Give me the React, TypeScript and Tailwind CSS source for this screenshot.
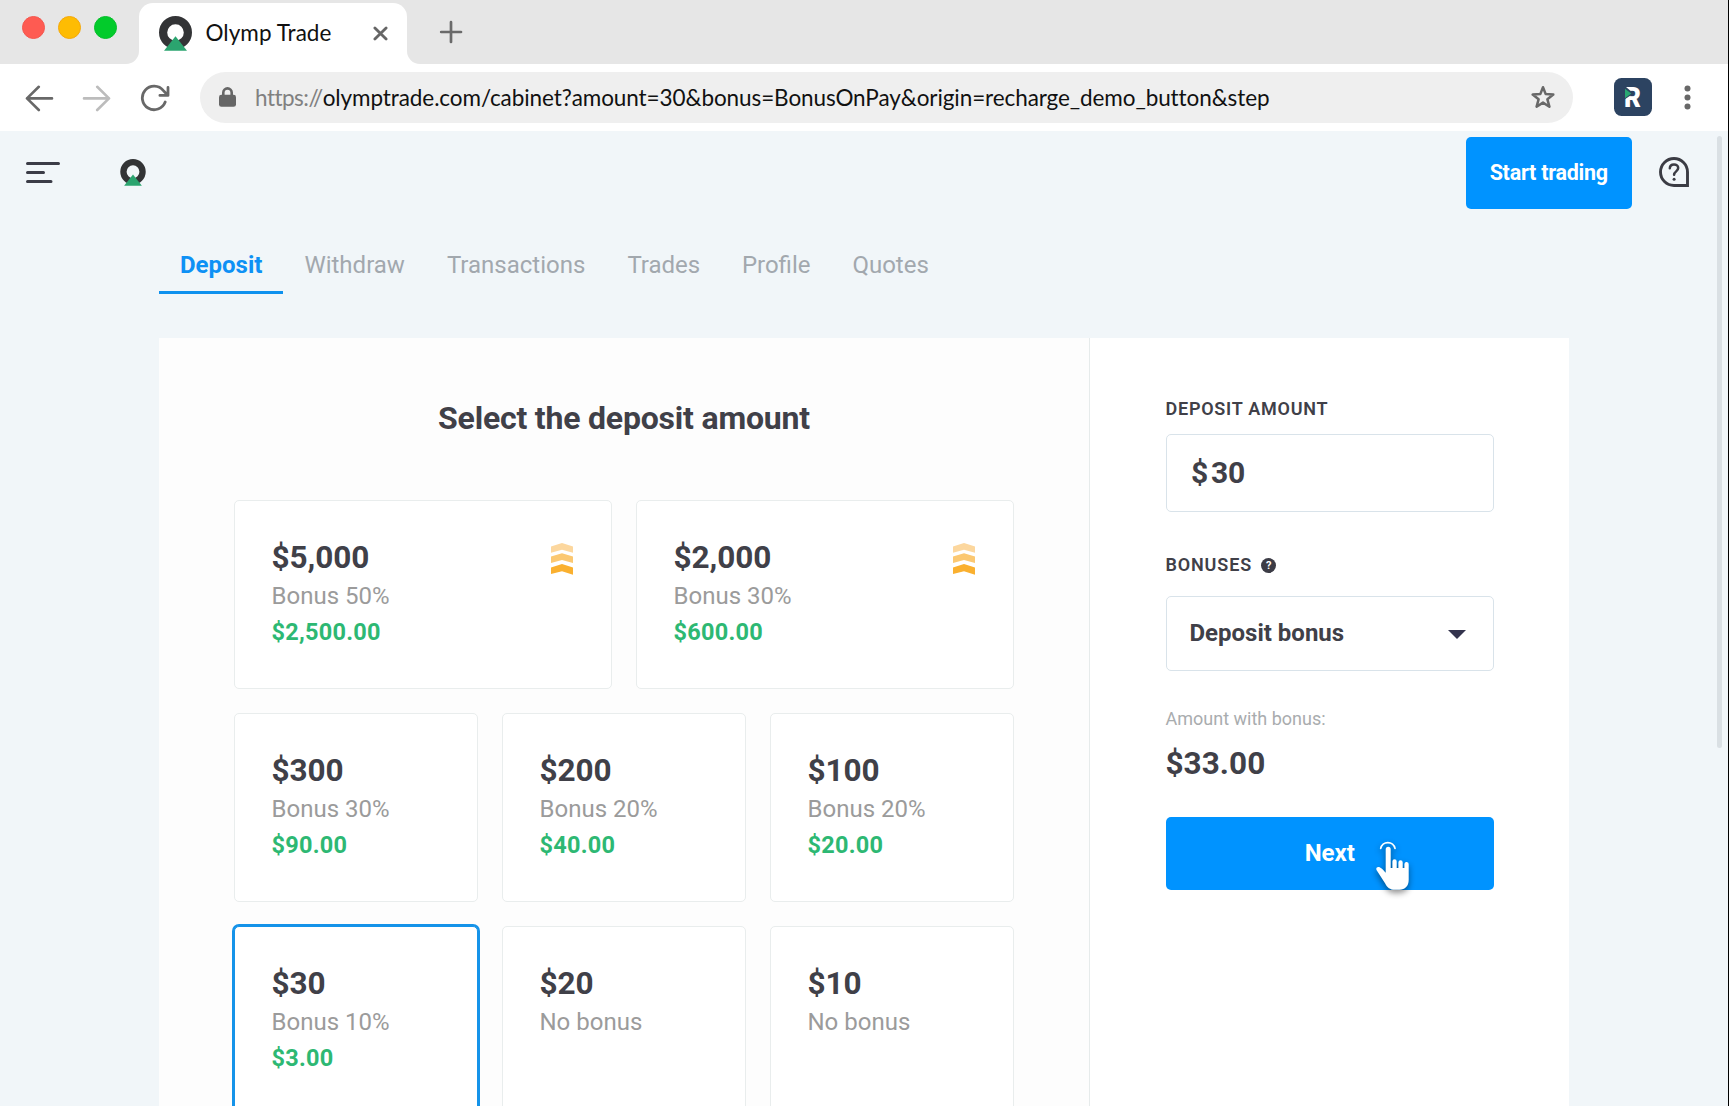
import type { ReactNode } from "react";

function OlympLogo({ className }: { className: string }) {
  return (
    <svg className={className} viewBox="0 0 33 35" fill="none">
      <circle cx="16.5" cy="16.5" r="12.4" stroke="#333436" strokeWidth="8.2" />
      <path d="M16.5 20.2 28 34.8H5z" fill="#2ba46f" />
    </svg>
  );
}

function TabStrip() {
  return (
    <div className="flex h-16 shrink-0 items-end bg-[#e6e6e6]">
      <div className="mb-[25px] ml-[22px] flex gap-[13px] self-end">
        <span className="size-[23px] rounded-full border border-[#f4574e] bg-[#fe5b52]" />
        <span className="size-[23px] rounded-full border border-[#f5a80b] bg-[#febc03]" />
        <span className="size-[23px] rounded-full border border-[#06bf2b] bg-[#02cb2b]" />
      </div>
      <svg className="ml-[9px] size-[13px] shrink-0" viewBox="0 0 13 13">
        <path d="M13 0v13H0A13 13 0 0 0 13 0z" fill="#fff" />
      </svg>
      <div className="flex h-[61px] w-[268px] shrink-0 rounded-t-[14px] bg-white pl-5">
        <OlympLogo className="mt-[13px] h-[35px] w-[33px] shrink-0" />
        <span className="ml-[13.5px] mt-3 w-[140px] whitespace-nowrap font-['Lato'] text-[22.5px] leading-[36px] tracking-[0.05px] text-[#111]">
          Olymp Trade
        </span>
        <svg className="ml-[27px] mt-[23px] size-[15px] shrink-0" viewBox="0 0 15 15" stroke="#666" strokeWidth="2.8" strokeLinecap="round">
          <path d="M1.9 1.9l11.2 11.2M13.1 1.9 1.9 13.1" />
        </svg>
      </div>
      <svg className="size-[13px] shrink-0" viewBox="0 0 13 13">
        <path d="M0 0v13h13A13 13 0 0 1 0 0z" fill="#fff" />
      </svg>
      <svg className="mb-[20px] ml-[18.5px] size-[24px] shrink-0" viewBox="0 0 24 24" stroke="#6a6a6a" strokeWidth="2.7" strokeLinecap="round">
        <path d="M12 2.2v19.8M2.2 12h19.8" />
      </svg>
    </div>
  );
}

function Toolbar() {
  return (
    <div className="flex h-[67px] shrink-0 items-start bg-white pt-2">
      <svg className="ml-[25px] mt-[13px] h-[27px] w-[29px] shrink-0" viewBox="0 0 29 27" fill="none" stroke="#686868" strokeWidth="2.6" strokeLinecap="round" strokeLinejoin="round">
        <path d="M27 13.4H2M13.8 1.8 2 13.4 13.8 25" />
      </svg>
      <svg className="ml-[28px] mt-[13px] h-[27px] w-[29px] shrink-0" viewBox="0 0 29 27" fill="none" stroke="#bcbcbc" strokeWidth="2.6" strokeLinecap="round" strokeLinejoin="round">
        <path d="M2 13.4h25M15.2 1.8 27 13.4 15.2 25" />
      </svg>
      <svg className="ml-[29px] mt-[12px] h-[28px] w-[30px] shrink-0" viewBox="0 0 30 28" fill="none" stroke="#686868" strokeWidth="2.8" strokeLinecap="round" strokeLinejoin="round">
        <path d="M25.2 18A11.8 11.8 0 1 1 23.4 6.6L26.6 10M28 3.5v7.9h-8.1" />
      </svg>
      <div className="ml-[30px] flex h-[51px] w-[1373px] shrink-0 rounded-full bg-[#efefef]">
        <svg className="ml-[19px] mt-[15px] h-[20px] w-[17px] shrink-0" viewBox="0 0 17 20" fill="none">
          <path d="M4.3 9V5.6a4.2 4.2 0 0 1 8.4 0V9" stroke="#666" strokeWidth="2.6" />
          <rect x="0" y="7.8" width="17" height="12" rx="2.4" fill="#666" />
        </svg>
        <span className="ml-[19px] w-[1200px] whitespace-nowrap font-['Lato'] text-[22.5px] leading-[51px] tracking-[-0.09px] text-[#111]">
          <span className="tracking-[-0.52px] text-[#808080]">https://</span>olymptrade.com/cabinet?amount=30&amp;bonus=BonusOnPay&amp;origin=recharge_demo_button&amp;step
        </span>
        <svg className="ml-[76px] mt-[13px] size-6 shrink-0" viewBox="0 0 24 24" fill="none" stroke="#686868" strokeWidth="2.5" strokeLinejoin="round">
          <path d="M12 2.2l2.7 6.9 7.6.5-5.9 4.7 2 7.4L12 17.6l-6.4 4.1 2-7.4L1.7 9.6l7.6-.5z" />
        </svg>
      </div>
      <svg className="ml-[41px] mt-[6px] size-[38px] shrink-0" viewBox="0 0 38 38">
        <rect width="38" height="38" rx="7.5" fill="#2c4361" />
        <text x="10" y="29" fontFamily="Roboto" fontWeight="900" fontSize="27.5" fill="#fff" textLength="17" lengthAdjust="spacingAndGlyphs">R</text>
        <path d="M9 8.5h2.5l8 7L9 22.5z" fill="#2c4361" />
        <path d="M11 10.8v9.400l6.200-4.700z" fill="#2aa873" />
      </svg>
      <svg className="ml-[32px] mt-[13px] h-[25px] w-[7px] shrink-0" viewBox="0 0 7 25" fill="#686868">
        <circle cx="3.5" cy="3.5" r="3" />
        <circle cx="3.5" cy="12.5" r="3" />
        <circle cx="3.5" cy="21.5" r="3" />
      </svg>
    </div>
  );
}

function AppHeader() {
  return (
    <div className="flex h-[78px] shrink-0 items-start">
      <svg className="ml-[25.5px] mt-[31px] h-[22px] w-[34px]" viewBox="0 0 34 22" stroke="#3b3c47" strokeWidth="3" strokeLinecap="round">
        <path d="M1.5 1.6h31M1.5 10.5h16M1.5 19.5H25" />
      </svg>
      <OlympLogo className="ml-[60px] mt-[28px] h-[27px] w-[26px]" />
      <button className="ml-auto mt-[5.5px] h-[72px] w-[166.5px] rounded-[5px] bg-[#0093ff] pt-px text-[21.5px] font-bold tracking-[-0.25px] text-white">
        Start trading
      </button>
      <svg className="ml-[27px] mr-[39px] mt-[26px] h-[30px] w-[30px]" viewBox="0 0 30 30" fill="none" stroke="#3b3c44" strokeLinecap="round">
        <path d="M28.5 28.5H15A13.500 13.500 0 1 1 28.500 15z" strokeWidth="2.9" strokeLinejoin="miter" />
        <path d="M10.8 11.2c.1-2.300 1.900-3.700 4.200-3.700 2.400 0 4.200 1.500 4.200 3.600 0 3.200-4 3.300-4.100 6.600" strokeWidth="2.5" />
        <circle cx="15.1" cy="22.3" r="1.5" fill="#3b3c44" stroke="none" />
      </svg>
    </div>
  );
}

const navItems = [
  { label: "Withdraw", width: "w-[142.5px]" },
  { label: "Transactions", width: "w-[180.5px]" },
  { label: "Trades", width: "w-[114.5px]" },
  { label: "Profile", width: "w-[110.5px]" },
  { label: "Quotes", width: "w-[118px]" },
];

function Nav() {
  return (
    <nav className="ml-[159px] mt-[29px] flex h-[56px] shrink-0 text-[24px] leading-[54px] text-[#a2a8ae]">
      <span className="w-[124.4px] border-b-[3px] border-[#0e91ee] text-center font-bold text-[#0e91f5]">
        Deposit
      </span>
      {navItems.map((n) => (
        <span key={n.label} className={`${n.width} pl-[21px]`}>
          {n.label}
        </span>
      ))}
    </nav>
  );
}

function RankIcon() {
  return (
    <svg className="ml-auto mt-[5px] h-[32px] w-[22px]" viewBox="0 0 22 32">
      <path d="M0 3.4 11 0l11 3.4v6.4L11 6.8 0 9.8z" fill="#fcd79e" />
      <path d="M0 13.6 11 10.2l11 3.4V20L11 17 0 20z" fill="#fbc872" />
      <path d="M0 24.4 11 21l11 3.4v7.4L11 28.2 0 31z" fill="#fab02f" />
    </svg>
  );
}

type CardProps = { amount: string; bonus: string; gain?: string; selected?: boolean; children?: ReactNode };

function AmountCard({ amount, bonus, gain, selected, children }: CardProps) {
  return (
    <div
      className={`flex h-[189px] rounded-[5px] border bg-white pl-[36.5px] pr-[38.5px] pt-[37px] ${
        selected ? "border-[#1593e9] ring-2 ring-[#1593e9]" : "border-[#e9eded]"
      }`}
    >
      <div className="whitespace-nowrap">
        <div className="text-[31.5px] font-bold leading-[39px] tracking-[-0.05px] text-[#404048]">{amount}</div>
        <div className="text-[24px] leading-[39px] text-[#9b9b9b]">{bonus}</div>
        {gain && <div className="text-[23.5px] font-bold leading-[33px] tracking-[0.25px] text-[#2db873]">{gain}</div>}
      </div>
      {children}
    </div>
  );
}

function AmountPicker() {
  return (
    <section className="w-[931px] shrink-0 border-r border-[#e6ebeb] bg-[#fdfdfd] pl-[75px] pt-[60px]">
      <h1 className="mb-[62px] w-[780px] text-center text-[32px] font-bold leading-[40px] tracking-[-0.2px] text-[#404048]">
        Select the deposit amount
      </h1>
      <div className="grid w-[780px] grid-cols-2 gap-6">
        <AmountCard amount="$5,000" bonus="Bonus 50%" gain="$2,500.00">
          <RankIcon />
        </AmountCard>
        <AmountCard amount="$2,000" bonus="Bonus 30%" gain="$600.00">
          <RankIcon />
        </AmountCard>
      </div>
      <div className="mt-6 grid w-[780px] grid-cols-3 gap-6">
        <AmountCard amount="$300" bonus="Bonus 30%" gain="$90.00" />
        <AmountCard amount="$200" bonus="Bonus 20%" gain="$40.00" />
        <AmountCard amount="$100" bonus="Bonus 20%" gain="$20.00" />
        <AmountCard amount="$30" bonus="Bonus 10%" gain="$3.00" selected />
        <AmountCard amount="$20" bonus="No bonus" />
        <AmountCard amount="$10" bonus="No bonus" />
      </div>
    </section>
  );
}

function PointerHand() {
  return (
    <svg className="absolute left-[204px] top-[18px] h-[64px] w-[50px] overflow-visible" viewBox="0 0 50 64" fill="none">
      <g className="drop-shadow-[0_3px_3px_rgba(0,0,0,0.45)]">
        <path d="M10.7 13.4A7.3 7.3 0 0 1 25 13.4" stroke="#fff" strokeWidth="1.7" strokeLinecap="round" />
        <path
          d="M15.2 14.2a2.500 2.500 0 0 1 5 0V33h1.700v-6.500a2.100 2.100 0 0 1 4.300 0V33h1.700v-5.500a2.100 2.100 0 0 1 4.300 0V33h1.700v-4a2.100 2.100 0 0 1 4.300 0.500V44.700c0 6.300-3.600 10-9.200 10h-4.600c-5 0-7.700-2.300-9.700-6.300L6 35c-1-2 1.200-3.700 3.500-2.500 2.400 1.200 3.800 3.200 5.700 5.300z"
          transform="translate(0.5 0)"
          fill="#fff"
        />
      </g>
    </svg>
  );
}

function Summary() {
  return (
    <section className="flex w-[479px] flex-col bg-white pl-[75.5px] pt-[61px] text-[#404048]">
      <div className="h-[35px] text-[18px] font-semibold leading-5 tracking-[0.75px]">DEPOSIT AMOUNT</div>
      <div className="flex h-[78px] w-[328.5px] gap-[3px] rounded-[5px] border border-[#d9e3ea] pl-[24.5px] text-[30px] font-bold leading-[75px] tracking-[-0.2px]">
        <span>$</span>
        <span>30</span>
      </div>
      <div className="mt-[43px] flex h-[41px] text-[18px] font-semibold leading-5 tracking-[0.85px]">
        BONUSES
        <span className="ml-[9px] mt-[2.5px] flex size-[15.5px] items-center justify-center rounded-full bg-[#3c3c46] text-[11px] font-bold leading-none tracking-normal text-white">
          ?
        </span>
      </div>
      <div className="flex h-[75px] w-[328.5px] items-center justify-between rounded-[5px] border border-[#d9e3ea] pb-[2px] pl-[23px] pr-[27.5px]">
        <span className="text-[24px] font-bold leading-8">Deposit bonus</span>
        <svg className="mt-[3px] h-[9px] w-[18px]" viewBox="0 0 18 9">
          <path d="M0 0h18L9 9z" fill="#33334d" />
        </svg>
      </div>
      <div className="mt-[37px] text-[18px] leading-[22px] text-[#a9acae]">Amount with bonus:</div>
      <div className="mt-[15px] text-[31.5px] font-bold leading-[38px] tracking-[0.05px]">$33.00</div>
      <div className="relative mt-[34px] h-[73px] w-[328.5px]">
        <button className="size-full rounded-[5px] bg-[#0093ff] pb-[2px] text-[24px] font-bold text-white">Next</button>
        <PointerHand />
      </div>
    </section>
  );
}

export default function App() {
  return (
    <div className="flex h-[1106px] w-[1729px] flex-col overflow-hidden border-r border-black bg-[#f1f6f9] font-['Roboto',sans-serif]">
      <TabStrip />
      <Toolbar />
      <div className="relative flex min-h-0 flex-1 flex-col">
        <AppHeader />
        <Nav />
        <main className="ml-[159px] mt-[44px] flex h-[800px] shrink-0">
          <AmountPicker />
          <Summary />
        </main>
        <div className="absolute right-[6px] top-[5px] h-[612px] w-[5px] rounded-full bg-[#dae0e4]" />
      </div>
    </div>
  );
}
